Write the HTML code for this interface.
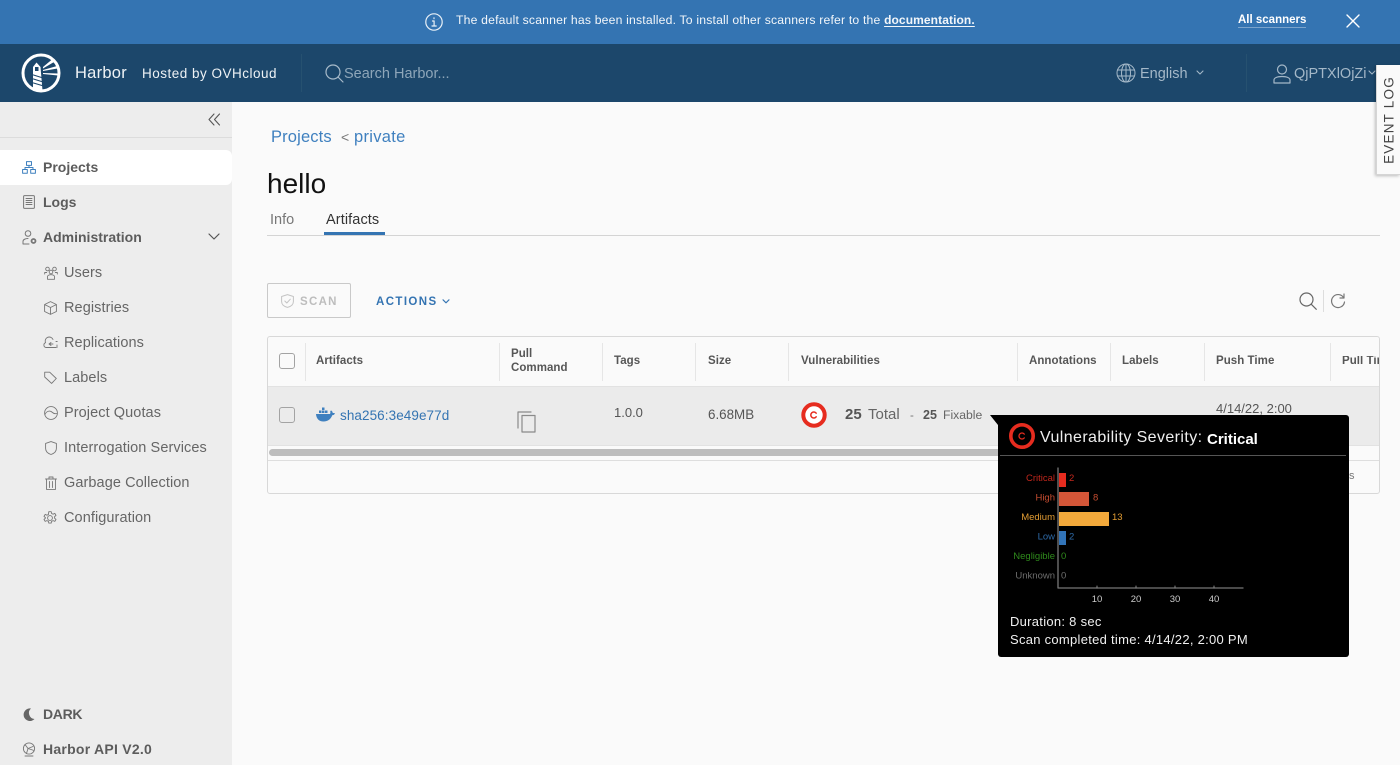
<!DOCTYPE html>
<html lang="en"><head><meta charset="utf-8"><title>Harbor</title>
<style>
*{box-sizing:border-box}
html,body{margin:0;padding:0;width:1400px;height:765px;overflow:hidden;background:#fafafa;font-family:"Liberation Sans",sans-serif;color:#575757}
body{filter:blur(.3px)}
.a{position:absolute;white-space:nowrap;line-height:1}
svg.a{overflow:visible;fill:none;stroke-linecap:round;stroke-linejoin:round}
.nav{font-size:14px;font-weight:700;color:#5c5c5c}
.sub{font-size:14.5px;color:#666;letter-spacing:.08px}
.th{font-size:11.5px;font-weight:700;color:#565656;letter-spacing:.05px}
.sep{position:absolute;width:1px;background:#e6e6e6}
.cb{position:absolute;left:279px;width:16px;height:16px;border:1px solid #a3a3a3;border-radius:3px}
.chart{font-family:"Liberation Sans",sans-serif;font-size:9.5px}
</style></head><body>
<div class="a" style="left:0;top:0;width:1400px;height:44px;background:#3474b2"></div>
<svg class="a" style="left:425px;top:13px" width="18" height="18" viewBox="0 0 18 18" stroke="#e8f0f7" stroke-width="1.2"><circle cx="9" cy="9" r="8.2"/><path d="M7.5 8h1.6v5M7 13h4.2M9 4.8v.8"/></svg>
<div class="a" style="left:456px;top:14px;font-size:12.2px;color:#f2f6fa;letter-spacing:.19px">The default scanner has been installed. To install other scanners refer to the <b style="font-size:12px;letter-spacing:.1px;text-decoration:underline;text-underline-offset:2px">documentation.</b></div>
<div class="a" style="left:1238px;top:15px;font-size:11.5px;font-weight:700;color:#fff;border-bottom:1px solid #7ba4cc;padding-bottom:0">All scanners</div>
<svg class="a" style="left:1346px;top:14px" width="14" height="14" viewBox="0 0 14 14" stroke="#fff" stroke-width="1.4"><path d="M1 1l12 12M13 1L1 13"/></svg>

<div class="a" style="left:0;top:44px;width:1400px;height:58px;background:#1c476b"></div>
<svg class="a" style="left:21px;top:53px" width="40" height="40" viewBox="0 0 40 40"><circle cx="20" cy="20" r="18" stroke="#fff" stroke-width="3"/><path d="M12 35.500 L12 14 L15.500 9.500 L19.500 14 L21.500 37.500 A18 18 0 0 1 12 35.500Z" fill="#fff" stroke="none"/><path d="M14 14h3.500v4H14z" fill="#1c476b" stroke="none"/><path d="M12.500 22l8 2.500M12.500 26l8 2.500M12.500 30l8.500 2.500" stroke="#1c476b" stroke-width="1.100"/><path d="M22 14L31 6.500 33 9 22 15.500ZM22 17L36 13 36.500 15.500 22 18ZM22 20L37 20.500 37 22.500 22 21Z" fill="#fff" stroke="none"/></svg>
<div class="a" style="left:75px;top:65px;font-size:16.5px;color:#eef2f5;letter-spacing:.25px">Harbor</div>
<div class="a" style="left:142px;top:67px;font-size:13.5px;color:#eef2f5;letter-spacing:.5px">Hosted by OVHcloud</div>
<div class="a" style="left:301px;top:54px;width:1px;height:38px;background:#265170"></div>
<svg class="a" style="left:325px;top:64px" width="19" height="19" viewBox="0 0 19 19" stroke="#a8bbca" stroke-width="1.200"><circle cx="8" cy="8" r="7"/><path d="M13 13l5 5"/></svg>
<div class="a" style="left:344px;top:67px;font-size:14.500px;color:#8ea6b9;letter-spacing:0">Search Harbor...</div>
<svg class="a" style="left:1116px;top:63px" width="20" height="20" viewBox="0 0 20 20" stroke="#a4b8c8" stroke-width="1"><circle cx="10" cy="10" r="9"/><ellipse cx="10" cy="10" rx="4.500" ry="9"/><path d="M10 1v18M1.500 7h17M1.500 13h17"/></svg>
<div class="a" style="left:1140px;top:67px;font-size:14.500px;color:#a4b8c8;letter-spacing:0">English</div>
<svg class="a" style="left:1196px;top:70px" width="8" height="6" viewBox="0 0 8 6" stroke="#a4b8c8" stroke-width="1.100"><path d="M1 1l3 3 3-3"/></svg>
<div class="a" style="left:1246px;top:54px;width:1px;height:38px;background:#265170"></div>
<svg class="a" style="left:1273px;top:64px" width="18" height="20" viewBox="0 0 18 20" stroke="#a4b8c8" stroke-width="1.200"><circle cx="9" cy="5.500" r="4.500"/><path d="M1 19v-3c0-2 3-3.500 8-3.500s8 1.500 8 3.500v3z"/></svg>
<div class="a" style="left:1294px;top:67px;font-size:14.500px;color:#a4b8c8">QjPTXlOjZi</div>
<svg class="a" style="left:1368px;top:70px" width="8" height="6" viewBox="0 0 8 6" stroke="#a4b8c8" stroke-width="1.100"><path d="M1 1l3 3 3-3"/></svg>
<div class="a" style="left:1376px;top:65px;width:24px;height:110px;background:#fafafa;border-left:1px solid #d5d5d5;border-bottom:1px solid #d5d5d5;box-shadow:-1px 1px 3px rgba(0,0,0,.25)"></div>
<div class="a" style="left:1389px;top:120px;font-size:13.500px;color:#444;letter-spacing:1.200px;transform:translate(-50%,-50%) rotate(-90deg)">EVENT LOG</div>

<div class="a" style="left:0;top:102px;width:232px;height:663px;background:#ededed"></div>
<div class="a" style="left:0;top:137px;width:232px;height:1px;background:#dcdcdc"></div>
<svg class="a" style="left:208px;top:113px" width="13" height="13" viewBox="0 0 13 13" stroke="#555" stroke-width="1.100"><path d="M6 1L1 6.500 6 12M11.500 1L6.500 6.500 11.500 12"/></svg>
<div class="a" style="left:0;top:150px;width:232px;height:35px;background:#fff;border-radius:0 6px 6px 0"></div>
<svg class="a" style="left:22px;top:161px" width="14" height="13" viewBox="0 0 14 13" stroke="#3f80bf" stroke-width="1"><path d="M4.500.6h5v3.800h-5zM.6 8.500h4.700v3.800H.6zM8.700 8.500h4.700v3.800H8.700zM7 4.400v2.100M3 8.500V6.500h8v2"/></svg>
<div class="a nav" style="left:43px;top:160px">Projects</div>
<svg class="a" style="left:23px;top:195px" width="12" height="14" viewBox="0 0 12 14" stroke="#777" stroke-width="1"><rect x=".6" y=".6" width="10.800" height="12.800" rx="1"/><path d="M3 3.500h6M3 5.500h6M3 7.500h6M3 9.500h6" stroke-width=".9"/></svg>
<div class="a nav" style="left:43px;top:195px">Logs</div>
<svg class="a" style="left:22px;top:230px" width="15" height="15" viewBox="0 0 15 15" stroke="#777" stroke-width="1"><circle cx="6" cy="3.500" r="2.800"/><path d="M1 14v-2.500C1 9.500 3.500 8.500 6 8.500M1 14h6"/><circle cx="11.500" cy="11" r="2" stroke-width="1.800"/></svg>
<div class="a nav" style="left:43px;top:230px">Administration</div>
<svg class="a" style="left:208px;top:233px" width="12" height="8" viewBox="0 0 12 8" stroke="#555" stroke-width="1.200"><path d="M1 1l5 5 5-5"/></svg>

<svg class="a" style="left:44px;top:266px" width="14" height="14" viewBox="0 0 14 14" stroke="#777" stroke-width=".9"><circle cx="3.500" cy="3" r="1.800"/><circle cx="10.500" cy="3" r="1.800"/><circle cx="7" cy="6" r="1.800"/><path d="M.7 8V6.500h2M13.300 8V6.500h-2M3.500 13.300V10.500c0-1 1.500-1.800 3.500-1.800s3.500.8 3.500 1.800v2.800z"/></svg>
<div class="a sub" style="left:64px;top:266px">Users</div>
<svg class="a" style="left:44px;top:301px" width="13" height="14" viewBox="0 0 13 14" stroke="#777" stroke-width=".9"><path d="M6.500.6l5.900 2.900v7L6.500 13.400.6 10.500v-7zM.6 3.500l5.900 3 5.900-3M6.500 6.500v6.900"/></svg>
<div class="a sub" style="left:64px;top:301px">Registries</div>
<svg class="a" style="left:43px;top:336px" width="15" height="13" viewBox="0 0 15 13" stroke="#777" stroke-width=".9"><path d="M13 11.500H3A2.500 2.500 0 0 1 2.500 6.700 4 4 0 0 1 10 3.500M14 9v2.500M13 5.500h1.200M6 8h4M8 6.500L6 8l2 1.500"/></svg>
<div class="a sub" style="left:64px;top:336px">Replications</div>
<svg class="a" style="left:44px;top:371px" width="13" height="13" viewBox="0 0 13 13" stroke="#777" stroke-width=".9"><path d="M.7 1.200h5l6.600 6.300-4.700 4.900L.7 6z"/></svg>
<div class="a sub" style="left:64px;top:371px">Labels</div>
<svg class="a" style="left:44px;top:406px" width="14" height="14" viewBox="0 0 14 14" stroke="#777" stroke-width=".9"><circle cx="7" cy="7" r="6.400"/><path d="M.9 8.500C2.500 5 6 4 8.500 6.500c1 1 2.500 1.500 4.500 1"/></svg>
<div class="a sub" style="left:64px;top:406px">Project Quotas</div>
<svg class="a" style="left:45px;top:441px" width="12" height="14" viewBox="0 0 12 14" stroke="#777" stroke-width=".9"><path d="M6 .6l5.400 1.800v5C11.400 10.500 9 12.500 6 13.500 3 12.500.6 10.500.6 7.400v-5z"/></svg>
<div class="a sub" style="left:64px;top:441px">Interrogation Services</div>
<svg class="a" style="left:45px;top:476px" width="12" height="14" viewBox="0 0 12 14" stroke="#777" stroke-width=".9"><path d="M.5 3h11M4 3V1h4v2M1.500 3v10.400h9V3M4.500 5.500v6M7.500 5.500v6"/></svg>
<div class="a sub" style="left:64px;top:476px">Garbage Collection</div>
<svg class="a" style="left:43px;top:511px" width="14" height="14" viewBox="0 0 14 14" stroke="#777" stroke-width=".9"><circle cx="7" cy="7" r="2.400"/><path d="M5.800.7h2.400l.4 1.800 1.500.7 1.700-.8 1.200 2-1.400 1.200v1.600l1.400 1.200-1.200 2-1.700-.8-1.500.7-.4 1.800H5.800l-.4-1.800-1.500-.7-1.700.8-1.200-2 1.400-1.200V6.600L1 5.400l1.200-2 1.700.8 1.500-.7z"/></svg>
<div class="a sub" style="left:64px;top:511px">Configuration</div>
<svg class="a" style="left:23px;top:708px" width="12" height="13" viewBox="0 0 12 13"><path d="M8 .5A6.300 6.300 0 1 0 11.500 11 6 6 0 0 1 8 .5z" fill="#666" stroke="none"/></svg>
<div class="a nav" style="left:43px;top:707px;letter-spacing:-.3px">DARK</div>
<svg class="a" style="left:22px;top:742px" width="14" height="15" viewBox="0 0 14 15" stroke="#777" stroke-width=".9"><circle cx="7" cy="6.500" r="5.600"/><path d="M3 2.500l3 4 5-2M6 6.500L4.500 11.500M6 6.500l6 2M3 14h8" /></svg>
<div class="a nav" style="left:43px;top:742px;letter-spacing:.25px">Harbor API V2.0</div>

<div class="a" style="left:271px;top:129px;font-size:16.500px;color:#3f80bf;letter-spacing:.15px">Projects</div>
<div class="a" style="left:341px;top:130px;font-size:14px;color:#777">&lt;</div>
<div class="a" style="left:354px;top:129px;font-size:16.500px;color:#3f80bf;letter-spacing:.3px">private</div>
<div class="a" style="left:267px;top:170px;font-size:28px;color:#111">hello</div>
<div class="a" style="left:270px;top:213px;font-size:14.500px;color:#777">Info</div>
<div class="a" style="left:326px;top:213px;font-size:14.500px;color:#333;letter-spacing:.1px">Artifacts</div>
<div class="a" style="left:267px;top:235px;width:1113px;height:1px;background:#d4d4d4"></div>
<div class="a" style="left:324px;top:232px;width:61px;height:3px;background:#3474b2"></div>

<div class="a" style="left:267px;top:283px;width:84px;height:35px;border:1px solid #c9c9c9;border-radius:2px"></div>
<svg class="a" style="left:281px;top:294px" width="13" height="14" viewBox="0 0 13 14" stroke="#c4c4c4" stroke-width="1"><path d="M6.500.6l5.900 1.900v5c0 3-2.500 5-5.900 5.900C3.100 12.500.6 10.500.6 7.500v-5z"/><path d="M3.800 7l2 2 3.500-3.800"/></svg>
<div class="a" style="left:300px;top:297px;font-size:11.500px;font-weight:700;color:#bdbdbd;letter-spacing:1.300px">SCAN</div>
<div class="a" style="left:376px;top:297px;font-size:11.500px;font-weight:700;color:#3474b2;letter-spacing:1.400px">ACTIONS</div>
<svg class="a" style="left:442px;top:299px" width="8" height="5" viewBox="0 0 8 5" stroke="#3474b2" stroke-width="1.100"><path d="M1 .8l3 3 3-3"/></svg>
<svg class="a" style="left:1299px;top:292px" width="18" height="18" viewBox="0 0 18 18" stroke="#666" stroke-width="1.200"><circle cx="7.500" cy="7.500" r="6.500"/><path d="M12.300 12.300l5 5"/></svg>
<div class="a" style="left:1323px;top:290px;width:1px;height:22px;background:#ddd"></div>
<svg class="a" style="left:1330px;top:293px" width="16" height="16" viewBox="0 0 16 16" stroke="#777" stroke-width="1.200"><path d="M13.500 4.500A6.500 6.500 0 1 0 14.500 9M14 1v4h-4"/></svg>

<div class="a" style="left:267px;top:336px;width:1113px;height:158px;border:1px solid #d8d8d8;border-radius:3px;overflow:hidden">
 <div class="a" style="left:0;top:49px;width:1111px;height:60px;background:#ebebeb;border-top:1px solid #e2e2e2;border-bottom:1px solid #e2e2e2"></div>
 <div class="a" style="left:1px;top:112px;width:900px;height:7px;background:#bdbdbd;border-radius:4px"></div>
 <div class="a" style="left:0;top:123px;width:1111px;height:1px;background:#dedede"></div>
</div>
<div class="sep" style="left:305px;top:343px;height:38px"></div>
<div class="sep" style="left:499px;top:343px;height:38px"></div>
<div class="sep" style="left:602px;top:343px;height:38px"></div>
<div class="sep" style="left:695px;top:343px;height:38px"></div>
<div class="sep" style="left:788px;top:343px;height:38px"></div>
<div class="sep" style="left:1017px;top:343px;height:38px"></div>
<div class="sep" style="left:1110px;top:343px;height:38px"></div>
<div class="sep" style="left:1204px;top:343px;height:38px"></div>
<div class="sep" style="left:1330px;top:343px;height:38px"></div>
<div class="cb" style="top:353px;background:#fafafa"></div>
<div class="cb" style="top:407px"></div>
<div class="a th" style="left:316px;top:356px">Artifacts</div>
<div class="a th" style="left:511px;top:349px">Pull</div>
<div class="a th" style="left:511px;top:363px">Command</div>
<div class="a th" style="left:614px;top:356px">Tags</div>
<div class="a th" style="left:708px;top:356px">Size</div>
<div class="a th" style="left:801px;top:356px">Vulnerabilities</div>
<div class="a th" style="left:1029px;top:356px">Annotations</div>
<div class="a th" style="left:1122px;top:356px">Labels</div>
<div class="a th" style="left:1216px;top:356px">Push Time</div>
<div class="a th" style="left:1342px;top:356px;width:37px;overflow:hidden">Pull Time</div>

<svg class="a" style="left:316px;top:407px" width="19" height="15" viewBox="0 0 19 15"><path d="M0 7h14c.5-1 .5-2 .200-3l1 -.5c1 .6 1.500 1.500 1.500 2.500.8 0 1.600 0 2.300.4-.7 1.400-1.700 1.800-2.800 1.900C15 12 12 14.500 7.500 14.500 3 14.500.3 11.500 0 7z" fill="#3f80bf" stroke="none"/><path d="M3 3.500h2.500V6H3zM6 3.500h2.500V6H6zM9 3.500h2.500V6H9zM6 .5h2.500V3H6z" fill="#3f80bf" stroke="none"/></svg>
<div class="a" style="left:340px;top:409px;font-size:13.500px;color:#3474b2;letter-spacing:.08px">sha256:3e49e77d</div>
<svg class="a" style="left:517px;top:411px" width="19" height="22" viewBox="0 0 19 22" stroke="#8a8a8a" stroke-width="1.200"><path d="M5 4.500h13V21H5zM1 17V1h13"/></svg>
<div class="a" style="left:614px;top:406px;font-size:13px;color:#555">1.0.0</div>
<div class="a" style="left:708px;top:408px;font-size:13.400px;color:#555">6.68MB</div>
<svg class="a" style="left:801px;top:402px" width="26" height="26" viewBox="0 0 26 26"><circle cx="13" cy="13" r="10.700" fill="#fff" stroke="#e62c1f" stroke-width="4"/><path d="M15.200 11.200A3 3 0 1 0 15.200 14.800" stroke="#e62c1f" stroke-width="1.500"/></svg>
<div class="a" style="left:845px;top:407px;font-size:15px;font-weight:700;color:#555">25</div>
<div class="a" style="left:868px;top:407px;font-size:15px;color:#666">Total</div>
<div class="a" style="left:910px;top:411px;font-size:11.500px;color:#777">-</div>
<div class="a" style="left:923px;top:409px;font-size:12.500px;font-weight:700;color:#555">25</div>
<div class="a" style="left:943px;top:409px;font-size:12.200px;color:#666">Fixable</div>
<div class="a" style="left:1216px;top:402px;font-size:13px;color:#555">4/14/22, 2:00</div>
<div class="a" style="left:1349px;top:471px;font-size:11px;color:#777">s</div>

<svg class="a" style="left:990px;top:415px" width="12" height="16" viewBox="0 0 12 16"><path d="M0 0H12V15Z" fill="#000" stroke="none"/></svg>
<div class="a" style="left:998px;top:415px;width:351px;height:242px;background:#000;border-radius:3px"></div>
<svg class="a" style="left:1008px;top:422px" width="28" height="28" viewBox="0 0 28 28"><circle cx="14" cy="14" r="11.200" fill="#000" stroke="#e62c1f" stroke-width="3.600"/><path d="M16.300 12.100A3 3 0 1 0 16.300 15.900" stroke="#e62c1f" stroke-width="1.300"/></svg>
<div class="a" style="left:1040px;top:430px;font-size:16px;color:#eee;letter-spacing:.4px">Vulnerability Severity:</div>
<div class="a" style="left:1207px;top:432px;font-size:15px;color:#fff;font-weight:700">Critical</div>
<div class="a" style="left:1000px;top:455px;width:346px;height:1px;background:#555"></div>

<svg class="a chart" style="left:998px;top:460px" width="351" height="150" viewBox="0 0 351 150">
<path d="M60 8V128H245" stroke="#777" stroke-width="1.300"/>
<path d="M99 128v-2M138 128v-2M177 128v-2M216 128v-2" stroke="#888"/>
<rect x="61" y="13" width="7" height="14" fill="#e62c1f"/>
<rect x="61" y="32" width="30" height="14" fill="#d45638"/>
<rect x="61" y="52" width="50" height="14" fill="#f2a93b"/>
<rect x="61" y="71" width="7" height="14" fill="#3274b8"/>
<g text-anchor="end" stroke="none">
<text x="57" y="21" fill="#c2271c">Critical</text>
<text x="57" y="40.500" fill="#c64c30">High</text>
<text x="57" y="60" fill="#e29c33">Medium</text>
<text x="57" y="79.500" fill="#2e6aa8">Low</text>
<text x="57" y="99" fill="#2f8a1c">Negligible</text>
<text x="57" y="118.500" fill="#6e6e6e">Unknown</text>
</g>
<g stroke="none">
<text x="71" y="21" fill="#c2271c">2</text>
<text x="95" y="40.500" fill="#c64c30">8</text>
<text x="114" y="60" fill="#e29c33">13</text>
<text x="71" y="79.500" fill="#2e6aa8">2</text>
<text x="63" y="99" fill="#2f8a1c">0</text>
<text x="63" y="118.500" fill="#6e6e6e">0</text>
</g>
<g text-anchor="middle" fill="#ccc" stroke="none">
<text x="99" y="142">10</text><text x="138" y="142">20</text><text x="177" y="142">30</text><text x="216" y="142">40</text>
</g>
</svg>
<div class="a" style="left:1010px;top:615px;font-size:13px;color:#f0f0f0;letter-spacing:.28px">Duration: 8 sec</div>
<div class="a" style="left:1010px;top:633px;font-size:13px;color:#f0f0f0;letter-spacing:.28px">Scan completed time: 4/14/22, 2:00 PM</div>
</body></html>
